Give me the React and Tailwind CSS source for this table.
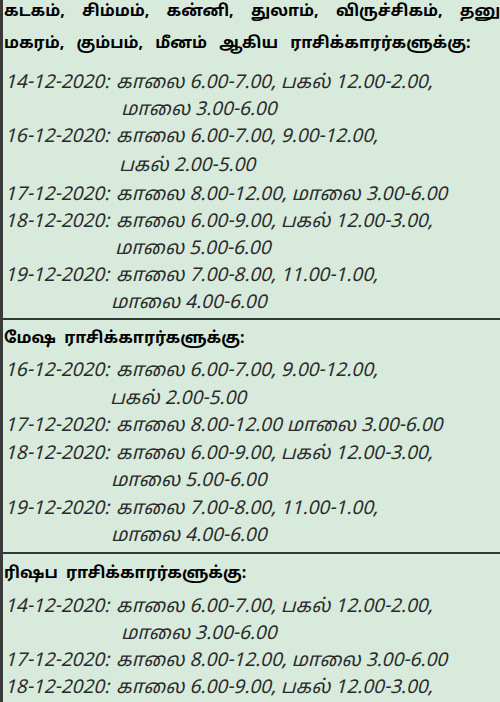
const FONT = { fontFamily: '"Noto Sans Tamil", "Noto Sans", "Liberation Sans", sans-serif' };

function Line({ date, text, indent = 'pl-[117px]', h = 'h-[27px]' }) {
  return (
    <div className={`${h} flex items-center whitespace-nowrap italic text-[19px] text-[#2a2a2a] ${date ? 'pl-[2px]' : indent}`}>
      {date && <span className="w-[111px] shrink-0">{date}</span>}
      <span>{text}</span>
    </div>
  );
}

function Heading({ children, h = 'h-[34px]', ws = '[word-spacing:4px]' }) {
  return (
    <div className={`${h} flex items-center whitespace-nowrap pl-[1px] font-bold text-[16px] text-black ${ws}`}>
      {children}
    </div>
  );
}

export default function App() {
  return (
    <div className="w-[500px] h-[702px] overflow-hidden bg-[#d7eadc] border-l-[3px] border-[#3a3a3a]" style={FONT}>
      {/* section 1 */}
      <div>
        <div className="h-[28px] -mt-[2px] flex items-center whitespace-nowrap pl-[1px] font-bold text-[16px] text-black [word-spacing:13px]">
          கடகம், சிம்மம், கன்னி, துலாம், விருச்சிகம், தனுசு,
        </div>
        <Heading h="h-[36px]" ws="[word-spacing:8px]">மகரம், கும்பம், மீனம் ஆகிய ராசிக்காரர்களுக்கு:</Heading>
        <div className="h-[8px]" />
        <Line date="14-12-2020:" text="காலை 6.00-7.00, பகல் 12.00-2.00," />
        <Line text="மாலை 3.00-6.00" indent="pl-[118px]" />
        <Line date="16-12-2020:" text="காலை 6.00-7.00, 9.00-12.00," />
        <Line text="பகல் 2.00-5.00" indent="pl-[116px]" h="h-[31px]" />
        <Line date="17-12-2020:" text="காலை 8.00-12.00, மாலை 3.00-6.00" />
        <Line date="18-12-2020:" text="காலை 6.00-9.00, பகல் 12.00-3.00," />
        <Line text="மாலை 5.00-6.00" indent="pl-[112px]" />
        <Line date="19-12-2020:" text="காலை 7.00-8.00, 11.00-1.00," />
        <Line text="மாலை 4.00-6.00" indent="pl-[108px]" />
      </div>
      <div className="h-[1px]" />
      <div className="h-[2px] bg-[#2f3a33]" />

      {/* section 2 */}
      <div>
        <Heading h="h-[38px]">மேஷ ராசிக்காரர்களுக்கு:</Heading>
        <Line date="16-12-2020:" text="காலை 6.00-7.00, 9.00-12.00," />
        <Line text="பகல் 2.00-5.00" indent="pl-[107px]" h="h-[28px]" />
        <Line date="17-12-2020:" text="காலை 8.00-12.00 மாலை 3.00-6.00" />
        <Line date="18-12-2020:" text="காலை 6.00-9.00, பகல் 12.00-3.00," h="h-[28px]" />
        <Line text="மாலை 5.00-6.00" indent="pl-[108px]" />
        <Line date="19-12-2020:" text="காலை 7.00-8.00, 11.00-1.00," h="h-[28px]" />
        <Line text="மாலை 4.00-6.00" indent="pl-[108px]" />
      </div>
      <div className="h-[2px]" />
      <div className="h-[2px] bg-[#2f3a33]" />

      {/* section 3 */}
      <div>
        <Heading h="h-[40px]">ரிஷப ராசிக்காரர்களுக்கு:</Heading>
        <Line date="14-12-2020:" text="காலை 6.00-7.00, பகல் 12.00-2.00," />
        <Line text="மாலை 3.00-6.00" indent="pl-[118px]" />
        <Line date="17-12-2020:" text="காலை 8.00-12.00, மாலை 3.00-6.00" />
        <Line date="18-12-2020:" text="காலை 6.00-9.00, பகல் 12.00-3.00," />
      </div>
    </div>
  );
}
